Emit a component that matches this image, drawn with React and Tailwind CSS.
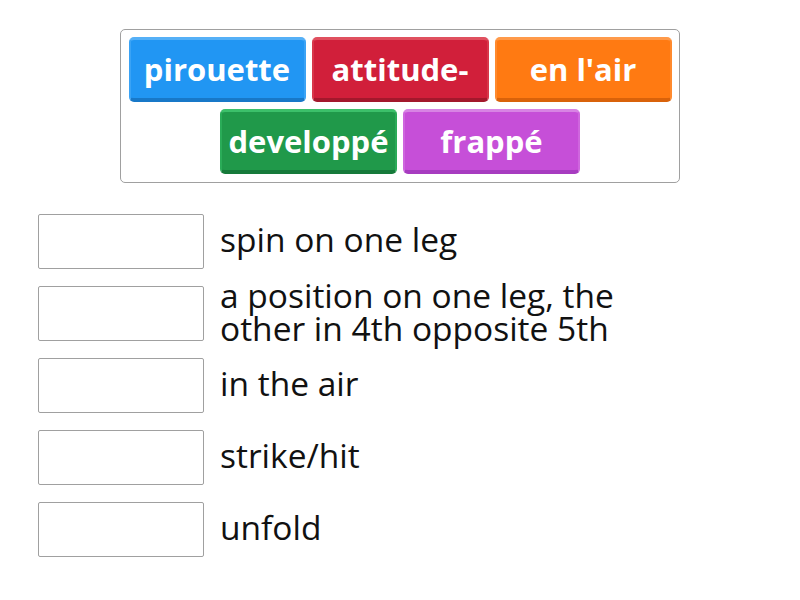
const tiles = [
  ['pirouette', 'bg-[#2196f3] border-t-[#55b0f7] border-x-[#3aa3f5] border-b-[#1878c8]'],
  ['attitude-', 'bg-[#d11f3a] border-t-[#e0505f] border-x-[#d8364a] border-b-[#a3182c]'],
  ["en l'air", 'bg-[#ff7a12] border-t-[#ff9a4a] border-x-[#ff8a2e] border-b-[#d9620a]'],
  ['developpé', 'bg-[#20994a] border-t-[#3cc06a] border-x-[#2aac58] border-b-[#167a3a]'],
  ['frappé', 'bg-[#c64fd8] border-t-[#d884e4] border-x-[#cf66de] border-b-[#a73cc0]'],
];

const rows = [
  'spin on one leg',
  'a position on one leg, the other in 4th opposite 5th',
  'in the air',
  'strike/hit',
  'unfold',
];

export default function App() {
  return (
    <div className="w-[800px] h-[600px] bg-white font-['Open_Sans',sans-serif]">
      <div className="pt-[29px] flex justify-center">
        <div className="w-[560px] border border-[#a0a0a0] rounded-[5px] pt-[7px] pb-[8px] flex flex-wrap justify-center gap-x-[6px] gap-y-[7px]">
          {tiles.map(([label, cls]) => (
            <div
              key={label}
              className={`w-[177px] h-[65px] rounded-[5px] border-t-[3px] border-x-[2px] border-b-[4px] flex items-center justify-center text-white font-bold text-[31px] leading-none whitespace-nowrap ${cls}`}
            >
              {label}
            </div>
          ))}
        </div>
      </div>

      <div className="mt-[31px] ml-[38px] flex flex-col gap-[17px]">
        {rows.map((text) => (
          <div key={text} className="flex items-center h-[55px]">
            <div className="w-[166px] h-[55px] shrink-0 border border-[#a0a0a0] rounded-[2px] bg-white" />
            <div className="ml-[16px] w-[420px] pb-[4px] text-[33.5px] leading-[33px] text-[#111]">
              {text}
            </div>
          </div>
        ))}
      </div>
    </div>
  );
}
